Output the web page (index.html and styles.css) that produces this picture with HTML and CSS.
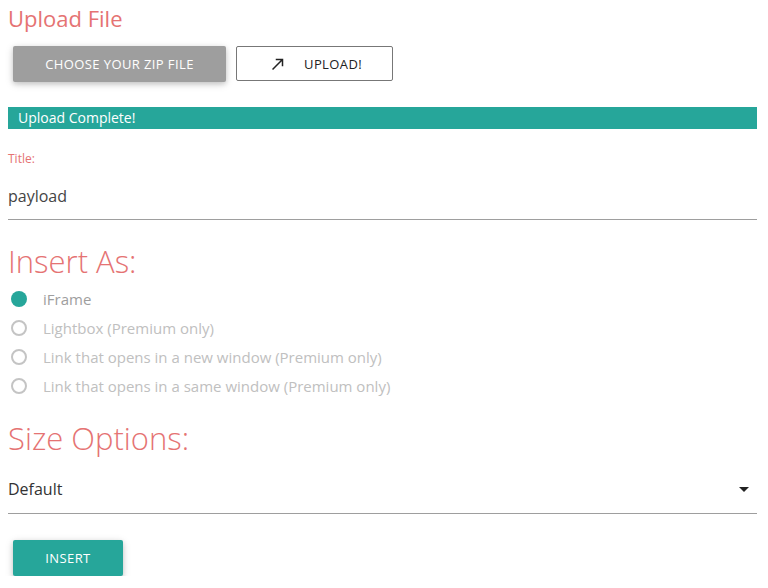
FILE: index.html
```html
<!DOCTYPE html>
<html>
<head>
<meta charset="utf-8">
<link rel="stylesheet" href="styles.css">
</head>
<body>
<div class="page">
  <h1 class="title">Upload File</h1>
  <div class="btn-row">
    <button class="btn btn-grey">Choose your zip file</button>
    <button class="btn btn-outline">
      <svg class="arrow" viewBox="0 0 24 24" width="18" height="18"><path d="M9 5v2h6.59L4 18.59 5.41 20 17 8.41V15h2V5z" fill="#222"/></svg>
      <span>Upload!</span>
    </button>
  </div>
  <div class="status">Upload Complete!</div>
  <div class="label">Title:</div>
  <div class="input">payload</div>
  <h2 class="section">Insert As:</h2>
  <div class="radios">
    <div class="radio checked"><span class="dot"></span><span class="rlabel">iFrame</span></div>
    <div class="radio"><span class="dot"></span><span class="rlabel">Lightbox (Premium only)</span></div>
    <div class="radio"><span class="dot"></span><span class="rlabel">Link that opens in a new window (Premium only)</span></div>
    <div class="radio"><span class="dot"></span><span class="rlabel">Link that opens in a same window (Premium only)</span></div>
  </div>
  <h2 class="section section2">Size Options:</h2>
  <div class="select"><span>Default</span><span class="caret"></span></div>
  <button class="btn btn-teal">Insert</button>
</div>
</body>
</html>
```
FILE: styles.css
```css
* { box-sizing: border-box; }
html, body { margin: 0; padding: 0; background: #fff; }
body { font-family: "Open Sans", "Noto Sans", sans-serif; color: #333; }
.page { padding: 0 11px 0 8px; }
.title {
  margin: 0; padding-top: 4px;
  font-size: 22px; line-height: 29px; font-weight: 400;
  color: #e57373;
}
.btn-row { display: flex; gap: 10px; margin-top: 13px; padding-left: 5px; }
.btn {
  height: 36px; border: none; border-radius: 2px;
  font-family: inherit; font-size: 13px; letter-spacing: 0.4px;
  text-transform: uppercase; padding: 0; cursor: pointer;
}
.btn-grey {
  width: 213px; background: #9e9e9e; color: #fff;
  box-shadow: 0 2px 5px rgba(0,0,0,.16), 0 2px 10px rgba(0,0,0,.12);
}
.btn-outline {
  width: 157px; height: 35px; background: #fff; color: #222;
  border: 1px solid #777; display: flex; align-items: center;
  padding-left: 32px; gap: 17px;
}
.arrow { display: block; }
.status {
  margin-top: 25px; height: 22px; line-height: 22px;
  background: #26a69a; color: #fff; font-size: 14px; padding-left: 10px;
}
.label {
  margin-top: 22px; font-size: 12px; line-height: 16px; color: #e57373;
}
.input {
  padding-top: 17px; padding-bottom: 11px; line-height: 24px;
  font-size: 16px; color: #444; border-bottom: 1px solid #9e9e9e;
}
.section {
  margin: 23px 0 0; font-size: 31px; line-height: 36px;
  font-weight: 300; color: #e57373;
}
.section2 { margin-top: 20px; }
.radios { margin-top: 5px; }
.radio { height: 29px; display: flex; align-items: center; }
.dot {
  width: 16px; height: 16px; margin-left: 3px; margin-right: 16px;
  border-radius: 50%; display: flex; align-items: center; justify-content: center;
}
.dot::before {
  content: ""; width: 16px; height: 16px; border-radius: 50%;
  border: 2px solid #c4c4c4; box-sizing: border-box; flex: none;
}
.checked .dot { background: #26a69a; }
.checked .dot::before { display: none; }
.rlabel { font-size: 15px; color: #c0c0c0; }
.checked .rlabel { color: #9e9e9e; }
.select {
  padding-top: 21px; padding-bottom: 12px; line-height: 24px;
  font-size: 16px; color: #333; border-bottom: 1px solid #9e9e9e;
  display: flex; justify-content: space-between; align-items: center;
}
.caret {
  width: 0; height: 0; margin-right: 8px;
  border-left: 5px solid transparent; border-right: 5px solid transparent;
  border-top: 5px solid #222;
}
.btn-teal {
  margin-top: 26px; margin-left: 5px; width: 110px;
  background: #26a69a; color: #fff; font-size: 13px;
  box-shadow: 0 2px 5px rgba(0,0,0,.16), 0 2px 10px rgba(0,0,0,.12);
  display: block;
}
```
